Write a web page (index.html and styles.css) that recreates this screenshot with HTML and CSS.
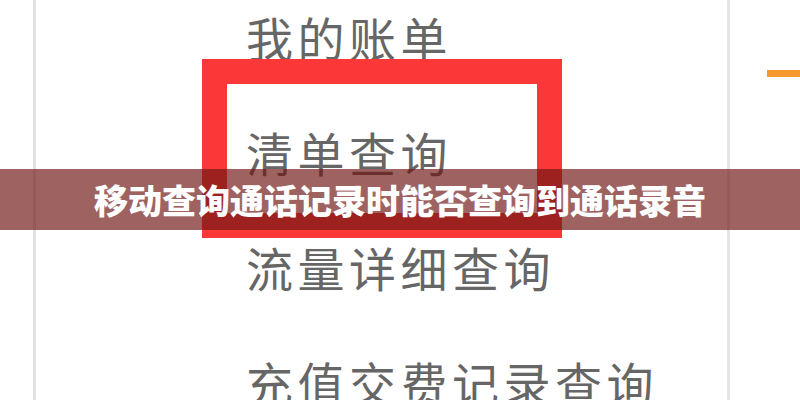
FILE: index.html
```html
<!DOCTYPE html>
<html lang="zh-CN">
<head>
<meta charset="utf-8">
<title>移动查询通话记录时能否查询到通话录音</title>
<link rel="stylesheet" href="styles.css">
</head>
<body>
<div class="page">
  <div class="gutter"></div>
  <nav class="panel">
    <ul class="menu">
      <li class="menu-item">我的账单</li>
      <li class="menu-item">清单查询</li>
      <li class="menu-item">流量详细查询</li>
      <li class="menu-item">充值交费记录查询</li>
    </ul>
  </nav>
  <aside class="side">
    <div class="accent"></div>
  </aside>
  <div class="highlight"></div>
  <h1 class="banner">移动查询通话记录时能否查询到通话录音</h1>
</div>
</body>
</html>
```

FILE: styles.css
```css
html, body {
  margin: 0;
  padding: 0;
  background: #ffffff;
}

.page {
  position: relative;
  display: flex;
  width: 800px;
  height: 400px;
  overflow: hidden;
  background: #ffffff;
  font-family: "Noto Sans CJK SC", "Noto Sans", sans-serif;
}

.gutter {
  width: 33px;
  flex: none;
}

.panel {
  width: 691px;
  flex: none;
  border-left: 3px solid #e2e2e2;
  border-right: 3px solid #e6e6e6;
}

.menu {
  list-style: none;
  margin: -21px 0 0 0;
  padding: 0 0 0 210px;
}

.menu-item {
  font-size: 47px;
  line-height: 115px;
  letter-spacing: 4.5px;
  color: #666666;
  white-space: nowrap;
}

.side {
  flex: 1;
  display: flex;
  flex-direction: column;
  padding-top: 70px;
}

.accent {
  width: 33px;
  height: 7px;
  margin-left: auto;
  background: #f7982f;
}

.highlight {
  position: absolute;
  left: 202px;
  top: 59px;
  width: 310px;
  height: 129px;
  border: 25px solid #fb3737;
}

.banner {
  position: absolute;
  left: 0;
  top: 169px;
  width: 100%;
  height: 61px;
  margin: 0;
  background: rgba(110, 23, 19, 0.67);
  color: #ffffff;
  font-size: 34px;
  font-weight: 900;
  line-height: 61px;
  text-align: center;
  letter-spacing: 0;
}
```
